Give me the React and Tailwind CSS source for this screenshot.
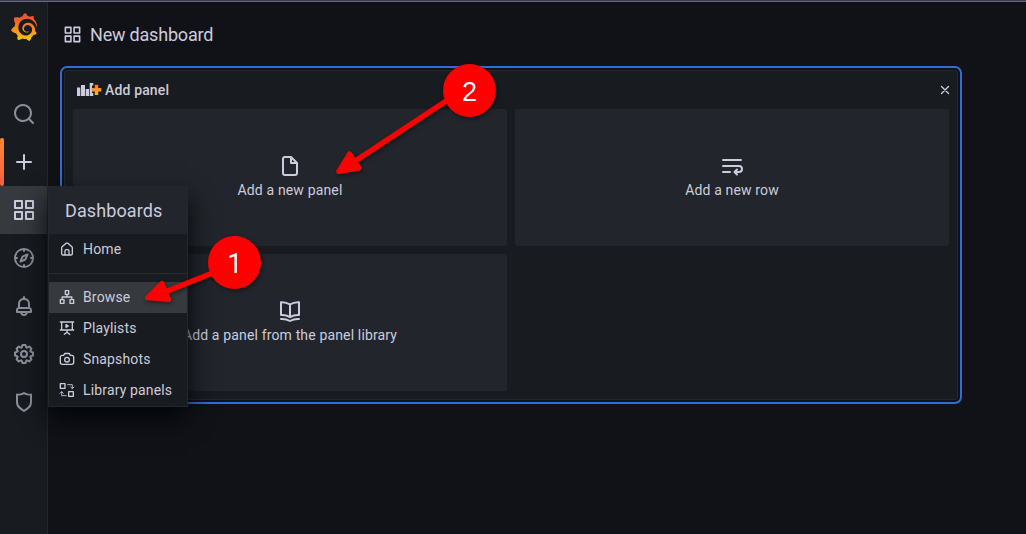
import React from 'react';
import { SiGrafana } from 'react-icons/si';

const PATHS = {
  apps: 'M10,13H3a1,1,0,0,0-1,1v7a1,1,0,0,0,1,1h7a1,1,0,0,0,1-1V14A1,1,0,0,0,10,13ZM9,20H4V15H9ZM21,2H14a1,1,0,0,0-1,1v7a1,1,0,0,0,1,1h7a1,1,0,0,0,1-1V3A1,1,0,0,0,21,2ZM20,9H15V4h5Zm1,4H14a1,1,0,0,0-1,1v7a1,1,0,0,0,1,1h7a1,1,0,0,0,1-1V14A1,1,0,0,0,21,13Zm-1,7H15V15h5ZM10,2H3A1,1,0,0,0,2,3v7a1,1,0,0,0,1,1h7a1,1,0,0,0,1-1V3A1,1,0,0,0,10,2ZM9,9H4V4H9Z',
  search: 'M21.71,20.29,18,16.61A9,9,0,1,0,16.61,18l3.68,3.68a1,1,0,0,0,1.42,0A1,1,0,0,0,21.71,20.29ZM11,18a7,7,0,1,1,7-7A7,7,0,0,1,11,18Z',
  plus: 'M19,11H13V5a1,1,0,0,0-2,0v6H5a1,1,0,0,0,0,2h6v6a1,1,0,0,0,2,0V13h6a1,1,0,0,0,0-2Z',
  bell: 'M18,13.18V10a6,6,0,0,0-5-5.91V3a1,1,0,0,0-2,0V4.09A6,6,0,0,0,6,10v3.18A3,3,0,0,0,4,16v2a1,1,0,0,0,1,1H8.14a4,4,0,0,0,7.72,0H19a1,1,0,0,0,1-1V16A3,3,0,0,0,18,13.18ZM8,10a4,4,0,0,1,8,0v3H8Zm4,10a2,2,0,0,1-1.72-1h3.44A2,2,0,0,1,12,20Zm6-3H6V16a1,1,0,0,1,1-1H17a1,1,0,0,1,1,1Z',
  home: 'M20,8h0L14,2.74a3,3,0,0,0-4,0L4,8a3,3,0,0,0-1,2.26V19a3,3,0,0,0,3,3H18a3,3,0,0,0,3-3V10.25A3,3,0,0,0,20,8ZM14,20H10V15a1,1,0,0,1,1-1h2a1,1,0,0,1,1,1Zm5-1a1,1,0,0,1-1,1H16V15a3,3,0,0,0-3-3H11a3,3,0,0,0-3,3v5H6a1,1,0,0,1-1-1V10.25a1,1,0,0,1,.34-.75l6-5.25a1,1,0,0,1,1.32,0l6,5.25a1,1,0,0,1,.34.75Z',
  shield: 'M19.63,3.65a1,1,0,0,0-.84-.2,8,8,0,0,1-6.22-1.27,1,1,0,0,0-1.14,0A8,8,0,0,1,5.21,3.45a1,1,0,0,0-.84.2A1,1,0,0,0,4,4.43v7.45a9,9,0,0,0,3.77,7.33l3.65,2.6a1,1,0,0,0,1.16,0l3.65-2.6A9,9,0,0,0,20,11.88V4.43A1,1,0,0,0,19.63,3.65ZM18,11.88a7,7,0,0,1-2.93,5.7L12,19.77,8.93,17.58A7,7,0,0,1,6,11.88V5.58a10,10,0,0,0,6-1.39,10,10,0,0,0,6,1.39Z',
  compass: 'M12,2A10,10,0,1,0,22,12,10,10,0,0,0,12,2Zm1,17.93V19a1,1,0,0,0-2,0v.93A8,8,0,0,1,4.07,13H5a1,1,0,0,0,0-2H4.07A8,8,0,0,1,11,4.07V5a1,1,0,0,0,2,0V4.07A8,8,0,0,1,19.93,11H19a1,1,0,0,0,0,2h.93A8,8,0,0,1,13,19.93ZM15.14,7.55l-5,2.12a1,1,0,0,0-.52.52l-2.12,5a1,1,0,0,0,.21,1.1,1,1,0,0,0,.7.29.93.93,0,0,0,.4-.08l5-2.12a1,1,0,0,0,.52-.52l2.12-5a1,1,0,0,0-1.31-1.31Zm-2.49,5.1-2.28,1,1-2.28,2.28-1Z',
  cog: 'M21.32,9.55l-1.89-.63.89-1.78A1,1,0,0,0,20.13,6L18,3.87a1,1,0,0,0-1.15-.19l-1.78.89-.63-1.89A1,1,0,0,0,13.5,2h-3a1,1,0,0,0-.95.68L8.92,4.57,7.14,3.68A1,1,0,0,0,6,3.87L3.87,6a1,1,0,0,0-.19,1.15l.89,1.78-1.89.63A1,1,0,0,0,2,10.5v3a1,1,0,0,0,.68.95l1.89.63-.89,1.78A1,1,0,0,0,3.87,18L6,20.13a1,1,0,0,0,1.15.19l1.78-.89.63,1.89a1,1,0,0,0,.95.68h3a1,1,0,0,0,.95-.68l.63-1.89,1.78.89A1,1,0,0,0,18,20.13L20.13,18a1,1,0,0,0,.19-1.15l-.89-1.78,1.89-.63A1,1,0,0,0,22,13.5v-3A1,1,0,0,0,21.32,9.55ZM20,12.78l-1.2.4A2,2,0,0,0,17.64,16l.57,1.14-1.1,1.1L16,17.64a2,2,0,0,0-2.79,1.16l-.4,1.2H11.22l-.4-1.2A2,2,0,0,0,8,17.64l-1.14.57-1.1-1.1L6.36,16A2,2,0,0,0,5.2,13.18L4,12.78V11.22l1.2-.4A2,2,0,0,0,6.36,8L5.79,6.89l1.1-1.1L8,6.36A2,2,0,0,0,10.82,5.2l.4-1.2h1.56l.4,1.2A2,2,0,0,0,16,6.36l1.14-.57,1.1,1.1L17.64,8a2,2,0,0,0,1.16,2.79l1.2.4ZM12,8a4,4,0,1,0,4,4A4,4,0,0,0,12,8Zm0,6a2,2,0,1,1,2-2A2,2,0,0,1,12,14Z',
  file: 'M20,8.94a1.31,1.31,0,0,0-.06-.27l0-.09a1.07,1.07,0,0,0-.19-.28h0l-6-6h0a1.07,1.07,0,0,0-.28-.19l-.09,0L13.06,2H7A3,3,0,0,0,4,5V19a3,3,0,0,0,3,3H17a3,3,0,0,0,3-3V9S20,9,20,8.94ZM14,5.41,16.59,8H14ZM18,19a1,1,0,0,1-1,1H7a1,1,0,0,1-1-1V5A1,1,0,0,1,7,4h5V9a1,1,0,0,0,1,1h5Z',
};

// Outline icons drawn with a 2-unit stroke; the optional second path is thinner.
const STROKES = {
  sitemap: ['M9.500 2.500h5v5.500h-5zM2 16h5.500v5.500H2zM16.500 16H22v5.500h-5.500zM12 8.500V12M4.750 16V12h14.500v4'],
  play: ['M2 3h20M4 3v12h16V3M2 15h20M12 15v4M8 21.500l4-3 4 3M10.500 7v4l3.500-2z'],
  camera: ['M5 6.500h2L8.500 3.800h7L17 6.500h2a3 3 0 0 1 3 3V17a3 3 0 0 1-3 3H5a3 3 0 0 1-3-3V9.500a3 3 0 0 1 3-3zM12 9.500a3.500 3.500 0 1 0 0 7 3.500 3.500 0 0 0 0-7z'],
  library: [
    'M2 2.500h7v7H2zM14.500 14.500h7v7h-7z',
    'M13 4h7v5.500M17.500 7.500l2.500 2.500 2.500-2.500M11 20.500H4v-6M1.500 17L4 14.500 6.500 17',
  ],
  book: ['M12 5.500C9 3.500 6 3 3 3.200V16c3-.2 6 .3 9 2.200 3-1.900 6-2.400 9-2.200V3.200C18 3 15 3.500 12 5.500zM12 5.500V18M3 20c3-.2 6 .3 9 2 3-1.700 6-2.200 9-2'],
  wrap: ['M3 6h18M3 12h16a2.500 2.500 0 0 1 0 6h-4M3 18h7M17 15.500L14.500 18l2.500 2.500'],
};

function Icon({ name, className }) {
  if (PATHS[name]) {
    return (
      <svg viewBox="0 0 24 24" className={className} fill="currentColor" aria-hidden="true">
        <path d={PATHS[name]} />
      </svg>
    );
  }
  const [main, thin] = STROKES[name];
  return (
    <svg viewBox="0 0 24 24" className={className} fill="none" stroke="currentColor" strokeWidth="2" strokeLinecap="round" strokeLinejoin="round" aria-hidden="true">
      <path d={main} />
      {thin && <path d={thin} strokeWidth="1.300" />}
    </svg>
  );
}

function NavItem({ name, bright, active, marker }) {
  return (
    <div className={'relative flex h-12 w-full items-center justify-center ' + (active ? 'bg-[#36393e] ' : '') + (bright ? 'text-[#ccccdc]' : 'text-[#8e8e99]')}>
      {marker && <span className="absolute top-0 left-0 h-12 w-1 rounded-[2px] bg-linear-to-b from-[#ff8833] to-[#f55f3e]" />}
      <Icon name={name} className="size-6" />
    </div>
  );
}

function Sidebar() {
  return (
    <nav className="flex w-12 shrink-0 flex-col border-r border-[#25272c] bg-[#181b1f]">
      <svg className="absolute size-0" aria-hidden="true">
        <defs>
          <linearGradient id="logo" x1="0" y1="0" x2="0" y2="1">
            <stop offset="0.15" stopColor="#f1542b" />
            <stop offset="1" stopColor="#fbca0a" />
          </linearGradient>
        </defs>
      </svg>
      <div className="mb-[35px] flex h-[53px] items-center justify-center">
        <SiGrafana size={28} fill="url(#logo)" className="mb-1" />
      </div>
      <NavItem name="search" />
      <NavItem name="plus" bright marker />
      <NavItem name="apps" bright active />
      <NavItem name="compass" />
      <NavItem name="bell" />
      <NavItem name="cog" />
      <NavItem name="shield" />
    </nav>
  );
}

function MenuItem({ name, label, active }) {
  return (
    <div className={'flex h-[31px] items-center gap-2 pb-[2px] pl-[10px] ' + (active ? 'bg-[#36393e]' : '')}>
      <Icon name={name} className="mt-px size-4" />
      <span>{label}</span>
    </div>
  );
}

function DashboardsMenu() {
  return (
    <div className="absolute top-[186px] left-12 w-[140px] border-r border-b border-l border-[#25272c] bg-[#181b1f] shadow-[0_12px_24px_rgba(1,4,9,0.9)]">
      <div className="flex h-12 items-center bg-[#22252b] pt-[2px] pl-4 text-lg tracking-[0.1px]">Dashboards</div>
      <MenuItem name="home" label="Home" />
      <div className="my-2 h-px bg-[#2a2c32]" />
      <MenuItem name="sitemap" label="Browse" active />
      <MenuItem name="play" label="Playlists" />
      <MenuItem name="camera" label="Snapshots" />
      <MenuItem name="library" label="Library panels" />
    </div>
  );
}

function Tile({ name, label }) {
  return (
    <div className="flex h-[137px] flex-col items-center rounded-[2px] bg-[#22252b] pt-[45px]">
      <Icon name={name} className="size-6" />
      <span className="mt-px leading-[22px]">{label}</span>
    </div>
  );
}

function AddPanelIcon() {
  return (
    <svg viewBox="0 0 25 16" className="h-4 w-[25px]" aria-hidden="true">
      <defs>
        <linearGradient id="plus" x1="0" y1="0" x2="0" y2="1">
          <stop offset="0" stopColor="#f2762b" />
          <stop offset="1" stopColor="#fbba20" />
        </linearGradient>
      </defs>
      <path fill="#ccccdc" d="M0 5.500h3.300v8.500H0zM4 3h4v11H4zM8.700 7h3.300v7H8.700zM12.700 1h3.600v2.500h-1.300v7.500h1.300V14h-3.600z" />
      <path fill="url(#plus)" d="M17.800 2.800h3.400v3.300h3.100v3.500h-3.100v3.300h-3.400V9.600h-3V6.100h3z" />
    </svg>
  );
}

function AddPanel() {
  return (
    <section className="mt-[3px] ml-4 h-[330px] w-[894px] rounded-[3px] border border-[#25272c] bg-[#181b1f] px-2 outline-2 outline-offset-2 outline-[#366bd0]">
      <header className="flex h-[38px] items-center pl-1">
        <AddPanelIcon />
        <span className="ml-[3px] font-medium">Add panel</span>
        <svg viewBox="0 0 10 10" className="mr-[-1px] ml-auto size-[10px]" stroke="currentColor" strokeWidth="1.4" strokeLinecap="round" aria-hidden="true">
          <path d="M1.500 1.500l7 7M8.500 1.500l-7 7" />
        </svg>
      </header>
      <div className="grid grid-cols-2 gap-2">
        <Tile name="file" label="Add a new panel" />
        <Tile name="wrap" label="Add a new row" />
        <Tile name="book" label="Add a panel from the panel library" />
      </div>
    </section>
  );
}

function Annotations() {
  return (
    <svg viewBox="0 0 1026 534" className="absolute top-0 left-0 h-[534px] w-[1026px]" style={{ filter: 'drop-shadow(1px 2px 2px rgba(0,0,0,0.4))' }}>
      <g fill="#ff0000" stroke="#ff0000" strokeLinejoin="round">
        <path strokeWidth="5.500" d="M164 292.500L215 272M353 162.500L450 98.500" />
        <path strokeWidth="5" d="M147.500 297.800L162 283.500L168.500 299.500zM338.700 171.500L349.500 154L359 168.200z" />
        <circle cx="234.500" cy="262.500" r="26.500" stroke="none" />
        <circle cx="469.500" cy="90.500" r="26.500" stroke="none" />
      </g>
      <g fill="#ffffff" textAnchor="middle">
        <text x="235" y="273" fontSize="27" fontFamily="Roboto, sans-serif">1</text>
        <text x="469.500" y="101" fontSize="27" fontFamily="Liberation Sans, sans-serif">2</text>
      </g>
    </svg>
  );
}

export default function App() {
  return (
    <div className="relative flex h-[534px] w-[1026px] flex-col overflow-hidden bg-[#111217] font-['Roboto',sans-serif] text-sm tracking-[0.15px] text-[#ccccdc]">
      <div className="h-0.5 shrink-0 border-b border-[#6b6783] bg-[#3d3a50]" />
      <div className="flex min-h-0 grow">
        <Sidebar />
        <main className="grow">
          <div className="flex h-[65px] items-center gap-2 pl-[15px]">
            <Icon name="apps" className="size-[19px]" />
            <h1 className="text-lg tracking-[-0.2px]">New dashboard</h1>
          </div>
          <AddPanel />
        </main>
      </div>
      <DashboardsMenu />
      <Annotations />
    </div>
  );
}
